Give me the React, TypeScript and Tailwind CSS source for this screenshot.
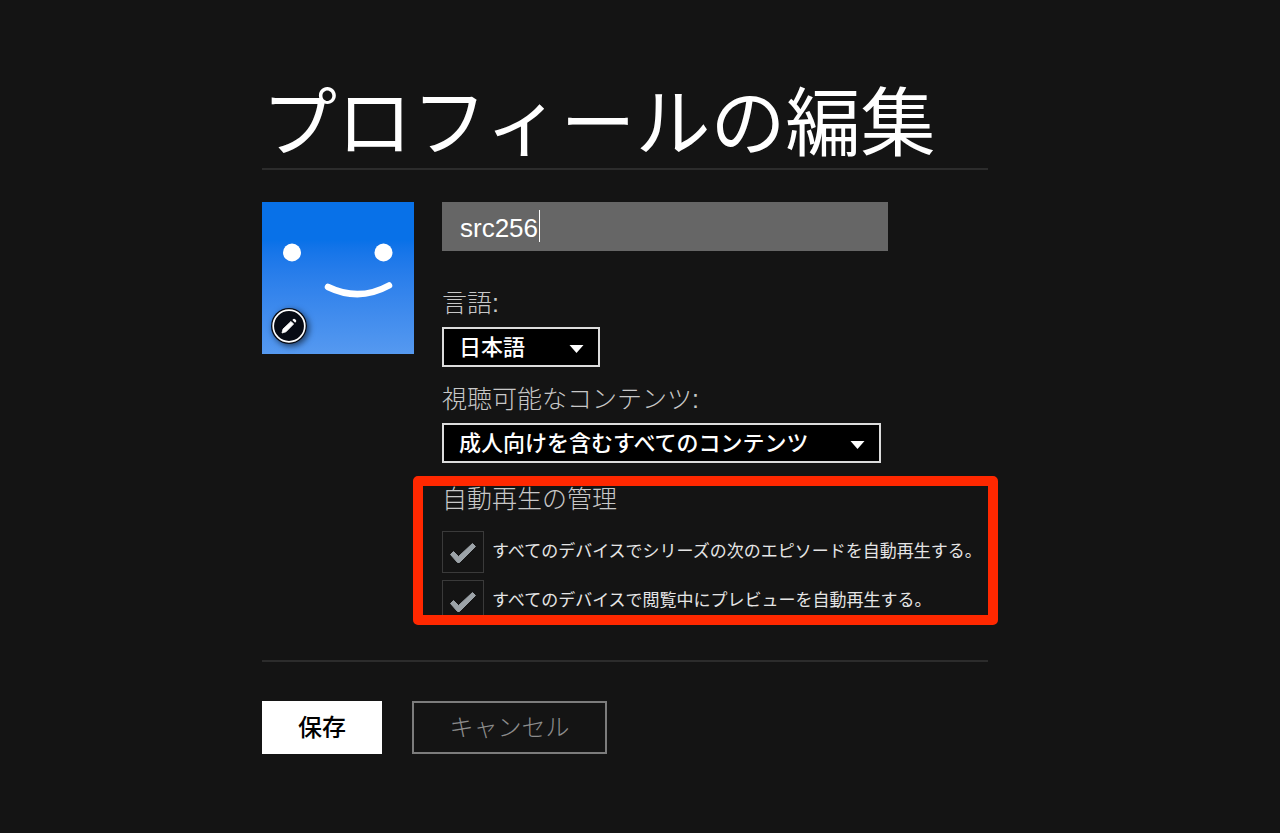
import { useState } from 'react';

const autoplayOptions = [
  { id: 'autoplay-next', label: 'すべてのデバイスでシリーズの次のエピソードを自動再生する。' },
  { id: 'autoplay-preview', label: 'すべてのデバイスで閲覧中にプレビューを自動再生する。' },
];

function Avatar() {
  return (
    <div className="relative size-[152px] shrink-0 bg-linear-to-b from-[#0871e8] from-25% to-[#5599f0]">
      <svg viewBox="0 0 152 152" className="size-full" aria-hidden="true">
        <circle cx="30" cy="50.5" r="9" fill="#fff" />
        <circle cx="121.5" cy="50.5" r="9" fill="#fff" />
        <path d="M66 85 Q97 100 127 83.5" fill="none" stroke="#fff" strokeWidth="6.5" strokeLinecap="round" />
      </svg>
      <button
        type="button"
        aria-label="アイコンを編集"
        className="absolute bottom-[10px] left-[9px] size-9 rounded-full shadow-[2px_2px_6px_rgba(0,0,0,0.6)]"
      >
        <svg viewBox="0 0 36 36" className="size-full" aria-hidden="true">
          <circle cx="18" cy="18" r="18" fill="#070b14" />
          <circle cx="18" cy="18" r="15.8" fill="none" stroke="#fff" strokeWidth="1.7" />
          <path d="M11 25 L12 21 L20 13.4 L22.6 16 L15 23.8 Z" fill="#fff" stroke="#fff" strokeWidth="0.8" strokeLinejoin="round" />
          <path d="M21.4 12 L22.3 11.1 Q23.2 10.400 24.1 11.2 L24.9 12 Q25.700 12.9 25 13.800 L24.1 14.700 Z" fill="#fff" />
        </svg>
      </button>
    </div>
  );
}

function Dropdown({ id, label, value, className }: { id: string; label: string; value: string; className: string }) {
  return (
    <div>
      <label htmlFor={id} className="block pb-2 text-[25px] leading-8 font-light text-[#c8c8c8]">
        {label}
      </label>
      <div className={`relative ${className}`}>
        <select
          id={id}
          className="block h-10 w-full appearance-none border-2 border-[#dcdcdc] bg-black pt-0.5 pl-[15px] text-[22px] leading-8 font-medium text-white"
        >
          <option>{value}</option>
        </select>
        <svg viewBox="0 0 14 8" className="pointer-events-none absolute top-[18px] right-4 h-2 w-[15px]" aria-hidden="true">
          <path d="M0 0H14L7 8Z" fill="#fff" />
        </svg>
      </div>
    </div>
  );
}

function AutoplayOption({ id, label }: { id: string; label: string }) {
  const [checked, setChecked] = useState(true);

  return (
    <div className="flex items-center gap-2">
      <div className="relative size-[42px] shrink-0">
        <input
          id={id}
          type="checkbox"
          checked={checked}
          onChange={(e) => setChecked(e.target.checked)}
          className="block size-full appearance-none border border-[#3a3a3a]"
        />
        {checked && (
          <svg viewBox="0 0 42 42" className="pointer-events-none absolute inset-0 size-full" aria-hidden="true">
            <path
              d="M8.5 23.5 L11.5 20.5 L16.5 25.500 L30.5 12.5 L33.5 15.5 L17.5 31.500 H15.5 Z"
              fill="#9ca3a8"
              stroke="#9ca3a8"
              strokeLinejoin="round"
            />
          </svg>
        )}
      </div>
      <label htmlFor={id} className="text-[17px] leading-6 whitespace-nowrap text-[#e5e5e5]">
        {label}
      </label>
    </div>
  );
}

export default function App() {
  const [name, setName] = useState('src256');

  return (
    <main lang="ja" className="min-h-screen bg-[#141414] pt-20 pb-20 font-['Liberation_Sans','Noto_Sans_CJK_JP',sans-serif] text-white">
      <form className="mx-auto w-full max-w-[756px] pr-[30px]" onSubmit={(e) => e.preventDefault()}>
        <h1 className="border-b-2 border-[#2c2c2c] text-[75px] leading-[88px] whitespace-nowrap">
          プロフィールの編集
        </h1>

        {/* Profile */}
        <div className="flex gap-7 border-b-2 border-[#2c2c2c] pt-8 pb-[38px]">
          <Avatar />
          <div className="min-w-0 flex-1">
            <div className="relative max-w-[446px]">
              <input
                type="text"
                aria-label="プロフィール名"
                value={name}
                onChange={(e) => setName(e.target.value)}
                className="block h-[49px] w-full bg-[#666] px-[18px] pt-1 text-[26px] text-white outline-none"
              />
              <span className="pointer-events-none absolute top-2 left-[97px] h-8 w-px bg-white" />
            </div>

            <div className="flex flex-col gap-4 pt-9">
              <Dropdown id="language" label="言語:" value="日本語" className="max-w-[158px]" />
              <Dropdown
                id="maturity"
                label="視聴可能なコンテンツ:"
                value="成人向けを含むすべてのコンテンツ"
                className="max-w-[439px]"
              />
            </div>

            <div role="group" aria-labelledby="autoplay-title" className="relative pt-5">
              <h2 id="autoplay-title" className="text-[25px] leading-8 font-light text-[#c8c8c8]">
                自動再生の管理
              </h2>
              <div className="flex flex-col gap-[7px] pt-4">
                {autoplayOptions.map((option) => (
                  <AutoplayOption key={option.id} id={option.id} label={option.label} />
                ))}
              </div>
              {/* Highlight frame */}
              <div className="pointer-events-none absolute top-[13px] -right-[10px] -bottom-[3px] -left-[29px] rounded-[5px] border-10 border-[#ff2800]" />
            </div>
          </div>
        </div>

        {/* Actions */}
        <div className="flex gap-[30px] pt-[39px]">
          <button type="submit" className="h-[53px] w-[120px] bg-white text-2xl font-medium text-black">
            保存
          </button>
          <button type="button" className="h-[53px] w-[195px] border-2 border-[#7c7c7c] text-2xl font-light text-[#8c8c8c]">
            キャンセル
          </button>
        </div>
      </form>
    </main>
  );
}
